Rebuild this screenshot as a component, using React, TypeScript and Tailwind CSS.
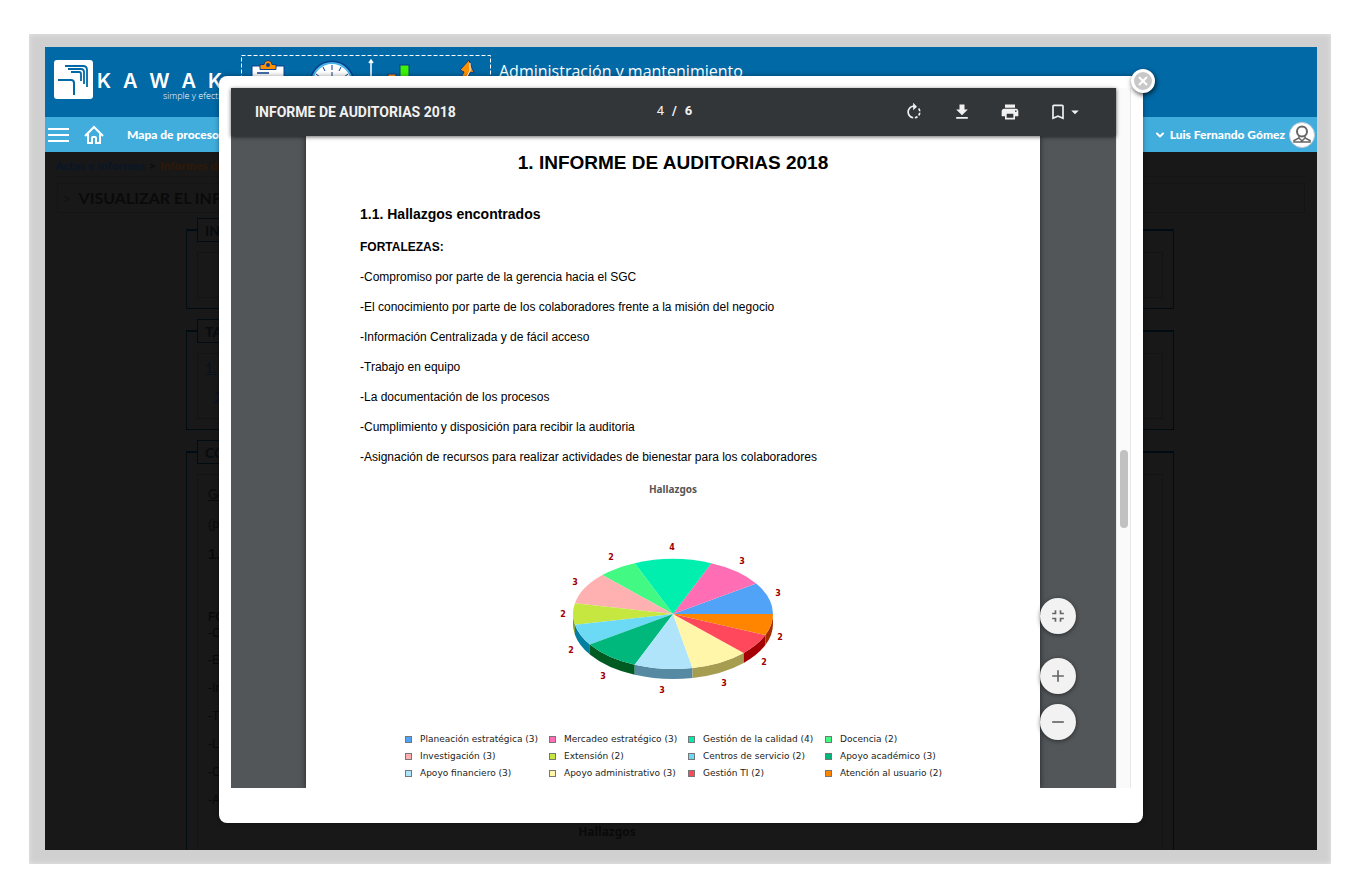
import { useState } from 'react';
import {
  MdAdd,
  MdArrowDropDown,
  MdBookmarkBorder,
  MdFileDownload,
  MdFullscreenExit,
  MdPrint,
  MdRemove,
  MdRotateRight,
} from 'react-icons/md';
import { ChevronDown } from 'lucide-react';

interface Slice {
  label: string;
  value: number;
  color: string;
  side: string;
  /** Position of the value printed around the pie. */
  x: number;
  y: number;
}

const SLICES: Slice[] = [
  { label: 'Planeación estratégica', value: 3, color: '#50a3f7', side: '#2b5f9a', x: 405, y: 97 },
  { label: 'Mercadeo estratégico', value: 3, color: '#ff6eb4', side: '#a3386c', x: 369, y: 65 },
  { label: 'Gestión de la calidad', value: 4, color: '#00efae', side: '#00916a', x: 299, y: 51 },
  { label: 'Docencia', value: 2, color: '#42f984', side: '#1f9a4c', x: 238, y: 61 },
  { label: 'Investigación', value: 3, color: '#ffb1b1', side: '#a56363', x: 202, y: 86 },
  { label: 'Extensión', value: 2, color: '#c5e73f', side: '#7e9c1c', x: 190, y: 118 },
  { label: 'Centros de servicio', value: 2, color: '#6cd9f5', side: '#007f9f', x: 198, y: 154 },
  { label: 'Apoyo académico', value: 3, color: '#00b77c', side: '#005a22', x: 230, y: 180 },
  { label: 'Apoyo financiero', value: 3, color: '#b0e4fb', side: '#568aa2', x: 289, y: 194 },
  { label: 'Apoyo administrativo', value: 3, color: '#fff6a9', side: '#a69d51', x: 351, y: 187 },
  { label: 'Gestión TI', value: 2, color: '#ff485c', side: '#a50003', x: 391, y: 166 },
  { label: 'Atención al usuario', value: 2, color: '#ff8400', side: '#a52b00', x: 407, y: 141 },
];

const FORTALEZAS = [
  '-Compromiso por parte de la gerencia hacia el SGC',
  '-El conocimiento por parte de los colaboradores frente a la misión del negocio',
  '-Información Centralizada y de fácil acceso',
  '-Trabajo en equipo',
  '-La documentación de los procesos',
  '-Cumplimiento y disposición para recibir la auditoria',
  '-Asignación de recursos para realizar actividades de bienestar para los colaboradores',
];

const CX = 300;
const CY = 115;
const RX = 100;
const RY = 55;
const DEPTH = 10;

const pointAt = (angle: number) => ({
  x: CX + RX * Math.cos(angle),
  y: CY - RY * Math.sin(angle),
});

function PieChart() {
  const total = SLICES.reduce((sum, s) => sum + s.value, 0);
  let start = 0;
  const parts = SLICES.map((s) => {
    const from = start;
    const to = start + (s.value / total) * Math.PI * 2;
    start = to;
    return { ...s, from, to };
  });

  return (
    <svg viewBox="0 0 600 210" className="block h-[210px] w-[600px]" role="img" aria-label="Hallazgos">
      {/* Rim, only for the front half */}
      {parts
        .filter((p) => p.to > Math.PI)
        .map((p) => {
          const a = pointAt(Math.max(p.from, Math.PI));
          const b = pointAt(p.to);
          return (
            <path
              key={p.label}
              d={`M${a.x} ${a.y}A${RX} ${RY} 0 0 0 ${b.x} ${b.y}v${DEPTH}A${RX} ${RY} 0 0 1 ${a.x} ${a.y + DEPTH}Z`}
              fill={p.side}
            />
          );
        })}
      {parts.map((p) => {
        const a = pointAt(p.from);
        const b = pointAt(p.to);
        return (
          <path
            key={p.label}
            d={`M${CX} ${CY}L${a.x} ${a.y}A${RX} ${RY} 0 0 0 ${b.x} ${b.y}Z`}
            fill={p.color}
          />
        );
      })}
      {parts.map((p) => (
        <text
          key={p.label}
          x={p.x}
          y={p.y}
          textAnchor="middle"
          fill="#a00000"
          className="font-['DejaVu_Sans'] text-[8px] font-bold"
        >
          {p.value}
        </text>
      ))}
    </svg>
  );
}

function Legend() {
  return (
    <ul className="grid grid-cols-[144px_139px_137px_120px] pl-8 font-['DejaVu_Sans',sans-serif] text-[9px] leading-[17px] text-[#222]">
      {SLICES.map((s) => (
        <li key={s.label} className="flex items-center gap-2 whitespace-nowrap">
          <span
            className="h-[7px] w-[7px] shrink-0 border border-[#777]"
            style={{ background: s.color }}
          />
          {s.label} ({s.value})
        </li>
      ))}
    </ul>
  );
}

function Logo() {
  return (
    <a href="#inicio" className="flex items-start pt-[13px] pl-[9px] text-white">
      <svg viewBox="0 0 39 39" className="h-[39px] w-[39px]" fill="none">
        <rect width="39" height="39" rx="3" fill="#fff" />
        <g stroke="#0069a6">
          <path d="M4 20h13q3 0 3 3v12" strokeWidth="2" />
          <path d="M17 12h8q2 0 2 2v7" strokeWidth="1.800" />
          <path d="M14 9h13q3 0 3 3v12" strokeWidth="1.800" />
          <path d="M11 6h18q4 0 4 4v17" strokeWidth="1.800" />
        </g>
      </svg>
      <span className="flex w-[137px] flex-col pt-[11px] pr-2 pl-[4px]">
        <span className="flex justify-between font-['Inter',sans-serif] text-[20px] leading-5 font-semibold">
          <span>K</span>
          <span>A</span>
          <span>W</span>
          <span>A</span>
          <span>K</span>
        </span>
        <span className="pl-[66px] font-['Open_Sans',sans-serif] text-[9px] leading-[10px] font-light whitespace-nowrap">
          simple y efectivo
        </span>
      </span>
    </a>
  );
}

function ModuleArt() {
  return (
    <svg viewBox="0 0 250 46" className="h-[46px] w-[250px]" fill="none">
      <rect x="0.500" y="0.500" width="249" height="60" stroke="#fff" strokeDasharray="4 2" />
      {/* Clipboard */}
      <rect x="11" y="11" width="32" height="34" fill="#fff" stroke="#0a3f8f" />
      <path d="M16 18h12M16 22h20M16 27h20" stroke="#0a3f8f" strokeWidth="1.500" />
      <path d="M19 14.500v-5h4q0-4 4-4t4 4h4v5z" fill="#ff9100" stroke="#0a3f8f" />
      <circle cx="27" cy="10" r="2" fill="#0a3f8f" />
      {/* Clock */}
      <circle cx="91" cy="28" r="21" fill="#fff" stroke="#0a3f8f" strokeWidth="3" />
      <circle cx="91" cy="28" r="20" stroke="#45b5e8" strokeWidth="2" />
      <path d="M91 10v5M91 17v11M82 12l2 4M100 12l-2 4M75 19l4 3M107 19l-4 3" stroke="#0a3f8f" />
      {/* Bar chart */}
      <path d="M130 45V6M128 8l2-3 2 3" stroke="#fff" strokeWidth="1.500" />
      <rect x="147" y="19" width="8" height="26" fill="#ff9100" stroke="#0a3f8f" />
      <rect x="159" y="10" width="9" height="35" fill="#3df500" stroke="#0a3f8f" />
      {/* Arrow */}
      <path d="M219 15l9-10 5 13-4-1-4 12-7-3 5-9z" fill="#ff9100" stroke="#0a3f8f" />
      <path d="M229 8v8l-4 7" stroke="#fff" />
    </svg>
  );
}

function TopBar() {
  return (
    <>
      <header className="flex h-[70px] shrink-0 items-start bg-[#0069a6]">
        <Logo />
        <div className="flex items-start gap-2 pt-2 pl-[11px]">
          <ModuleArt />
          <span className="pt-1 font-['Open_Sans',sans-serif] text-[16px] leading-6 text-white">
            Administración y mantenimiento
          </span>
        </div>
      </header>
      <nav className="flex h-[35px] shrink-0 items-center bg-[#41addc] pr-[2px] pl-[3px] font-['Lato',sans-serif] text-[12px] font-black text-white">
        <button aria-label="Menú" className="flex h-[14px] w-[21px] flex-col justify-between">
          <span className="h-[2px] w-full bg-white" />
          <span className="h-[2px] w-full bg-white" />
          <span className="h-[2px] w-full bg-white" />
        </button>
        <a href="#inicio" aria-label="Inicio" className="ml-[15px]">
          <svg viewBox="0 0 20 20" className="h-5 w-5" fill="none" stroke="#fff" strokeWidth="2">
            <path d="M1 11l9-9 9 9" />
            <path d="M4 9v9h4v-5q0-1 1-1h2q1 0 1 1v5h4V9" />
          </svg>
        </a>
        <a href="#mapa" className="ml-[23px]">
          Mapa de procesos
        </a>
        <button className="ml-auto flex items-center gap-1">
          <ChevronDown size={12} strokeWidth={4} />
          Luis Fernando Gómez
          <svg viewBox="0 0 26 26" className="h-[26px] w-[26px]" fill="none">
            <circle cx="13" cy="13" r="12.500" fill="#fff" stroke="#c5ccd0" />
            <g stroke="#666" strokeWidth="2">
              <circle cx="13" cy="9.500" r="5" />
              <path d="M10 14v2l-5 2.500V20h16v-1.500L16 16v-2M10 16l3 3 3-3" strokeWidth="1.500" />
            </g>
          </svg>
        </button>
      </nav>
    </>
  );
}

const FIELDSET = 'border border-t-2 border-[#000b12] px-[10px] pb-[10px]';
const LEGEND =
  'flex h-6 items-center border border-[#000b12] px-[7px] text-[14px] font-bold text-[#060c0f]';
const INNER = 'mt-[10px] border border-[#131313]';

/** Report screen that stays dimmed behind the dialog. */
function DimmedPage() {
  return (
    <main className="min-h-0 flex-1 overflow-hidden bg-[#181818] px-3 pt-1 font-['Lato',sans-serif] text-[#0a0a0a]">
      <p className="border-b border-dotted border-[#111] text-[12px] leading-5 font-black text-[#0a1626] -ml-[2px]">
        <a href="#actas">Actas e Informes</a>
        <span className="px-1 text-[#0c0c0c]">&gt;</span>
        <a href="#informes" className="text-[#2f1808]">
          Informes de
        </a>
      </p>
      <h1 className="mt-[6px] border border-[#141414] px-1 text-[16px] leading-7 font-bold">
        <span className="pr-1 font-normal text-[#111]">&gt;</span> VISUALIZAR EL INFORME
      </h1>
      <div className="mr-[131px] ml-[129px] flex flex-col gap-[10px] pt-[5px]">
        <fieldset className={FIELDSET}>
          <legend className={LEGEND}>INFORME</legend>
          <div className={`${INNER} h-[46px]`} />
        </fieldset>
        <fieldset className={FIELDSET}>
          <legend className={LEGEND}>TABLA</legend>
          <div className={`${INNER} h-[66px] px-[7px] text-[14px] leading-7 text-[#07121f] underline`}>
            <a href="#s1" className="block">
              1.
            </a>
            <a href="#s11" className="block pl-[9px]">
              1.1.
            </a>
          </div>
        </fieldset>
        <fieldset className={FIELDSET}>
          <legend className={LEGEND}>CONTENIDO</legend>
          <div className={`${INNER} px-[10px] pt-1 font-['Liberation_Sans',sans-serif] text-[12px]`}>
            <p className="font-['Lato',sans-serif] text-[13px] leading-[30px] underline">General</p>
            <p className="text-[13px] leading-[30px]">(p)</p>
            <h2 className="text-[15px] leading-[30px] font-bold">1.</h2>
            <p className="mt-10 leading-4 font-bold">FORTALEZAS:</p>
            <p className="mb-[5px] leading-4">-Compromiso</p>
            <p className="leading-7">-El</p>
            <p className="leading-7">-Información</p>
            <p className="leading-7">-Trabajo</p>
            <p className="leading-7">-La</p>
            <p className="leading-7">-Cumplimiento</p>
            <p className="leading-7">-Asignación</p>
            <p className="w-[798px] text-center font-['Noto_Sans',sans-serif] text-[12px] leading-9 font-bold">
              Hallazgos
            </p>
          </div>
        </fieldset>
      </div>
    </main>
  );
}

function PdfToolbar({ page, pages }: { page: number; pages: number }) {
  return (
    <div className="relative z-10 flex h-12 shrink-0 items-center bg-[#323639] pr-8 pl-6 font-['Roboto',sans-serif] text-[#f1f1f1] shadow-[0_1px_4px_rgba(0,0,0,0.6)]">
      <h2 className="flex-1 text-[14px] font-bold">INFORME DE AUDITORIAS 2018</h2>
      <p className="ml-[10px] flex gap-2 pb-[2px] text-[13px] font-bold">
        <span className="font-normal">{page}</span>
        <span>/</span>
        <span>{pages}</span>
      </p>
      <div className="flex flex-1 items-center justify-end gap-7">
        <button aria-label="Girar">
          <MdRotateRight size={20} />
        </button>
        <button aria-label="Descargar">
          <MdFileDownload size={20} />
        </button>
        <button aria-label="Imprimir">
          <MdPrint size={20} />
        </button>
        <button aria-label="Marcadores" className="flex items-center">
          <MdBookmarkBorder size={20} />
          <MdArrowDropDown size={18} className="-ml-[2px]" />
        </button>
      </div>
    </div>
  );
}

const ROUND =
  'flex h-9 w-9 items-center justify-center rounded-full bg-[#f2f2f2] text-[#666] shadow-[0_1px_4px_rgba(0,0,0,0.5)]';

function PdfViewer() {
  return (
    <div className="flex min-h-0 flex-1">
      <div className="relative flex min-w-0 flex-1 flex-col bg-[#525659]">
        <PdfToolbar page={4} pages={6} />
        <div className="min-h-0 flex-1 overflow-hidden">
          <article className="mr-[76px] ml-[75px] min-h-full bg-white px-[54px] pt-3 font-['Liberation_Sans',sans-serif] text-[12px] text-black shadow-[0_0_6px_rgba(0,0,0,0.6)]">
            <h1 className="text-center text-[19px] leading-[30px] font-bold">
              1. INFORME DE AUDITORIAS 2018
            </h1>
            <h2 className="mt-[21px] text-[14px] leading-[30px] font-bold">
              1.1. Hallazgos encontrados
            </h2>
            <h3 className="mt-[3px] leading-[30px] font-bold">FORTALEZAS:</h3>
            {FORTALEZAS.map((f) => (
              <p key={f} className="leading-[30px]">
                {f}
              </p>
            ))}
            <figure className="mx-auto w-[600px] pt-[7px]">
              <figcaption className="text-center font-['Noto_Sans',sans-serif] text-[10px] leading-5 font-bold text-[#555]">
                Hallazgos
              </figcaption>
              <PieChart />
              <div className="pt-[22px]">
                <Legend />
              </div>
            </figure>
          </article>
        </div>
        <div className="absolute right-10 bottom-12 z-10 flex flex-col">
          <button aria-label="Ajustar a la página" className={`${ROUND} mb-6`}>
            <MdFullscreenExit size={20} />
          </button>
          <button aria-label="Acercar" className={`${ROUND} mb-[10px]`}>
            <MdAdd size={20} />
          </button>
          <button aria-label="Alejar" className={ROUND}>
            <MdRemove size={20} />
          </button>
        </div>
      </div>
      <div className="flex w-[15px] justify-center border-x border-[#e8e8e8] bg-[#fafafa] pt-[362px]">
        <div className="h-[78px] w-2 rounded-full bg-[#c1c1c1]" />
      </div>
    </div>
  );
}

export default function App() {
  const [open, setOpen] = useState(true);

  return (
    <div className="flex h-screen bg-white pt-[34px] pr-[31px] pb-8 pl-[29px]">
      <div className="flex min-w-0 flex-1 bg-[#d0d0d0] pt-[13px] pr-[14px] pb-[14px] pl-4 shadow-[inset_0_0_5px_#e8e8e8]">
        <div className="relative flex min-w-0 flex-1 flex-col overflow-hidden">
          <TopBar />
          <DimmedPage />
          {open && (
            <div className="absolute inset-0 flex px-[174px] pt-[29px] pb-[27px]">
              <div
                role="dialog"
                aria-label="INFORME DE AUDITORIAS 2018"
                className="relative flex min-w-0 flex-1 flex-col rounded-lg bg-white px-3 pt-3 pb-[35px] shadow-[0_0_5px_rgba(0,0,0,0.4)]"
              >
                <PdfViewer />
                <button
                  aria-label="Cerrar"
                  onClick={() => setOpen(false)}
                  className="absolute -top-[7px] -right-3 flex h-6 w-6 items-center justify-center rounded-full border-[3px] border-white bg-[#c8c8c8] shadow-[1px_2px_5px_rgba(0,0,0,0.7)]"
                >
                  <svg viewBox="0 0 10 10" className="h-[10px] w-[10px]" stroke="#fff" strokeWidth="2">
                    <path d="M1 1l8 8M9 1l-8 8" />
                  </svg>
                </button>
              </div>
            </div>
          )}
        </div>
      </div>
    </div>
  );
}
